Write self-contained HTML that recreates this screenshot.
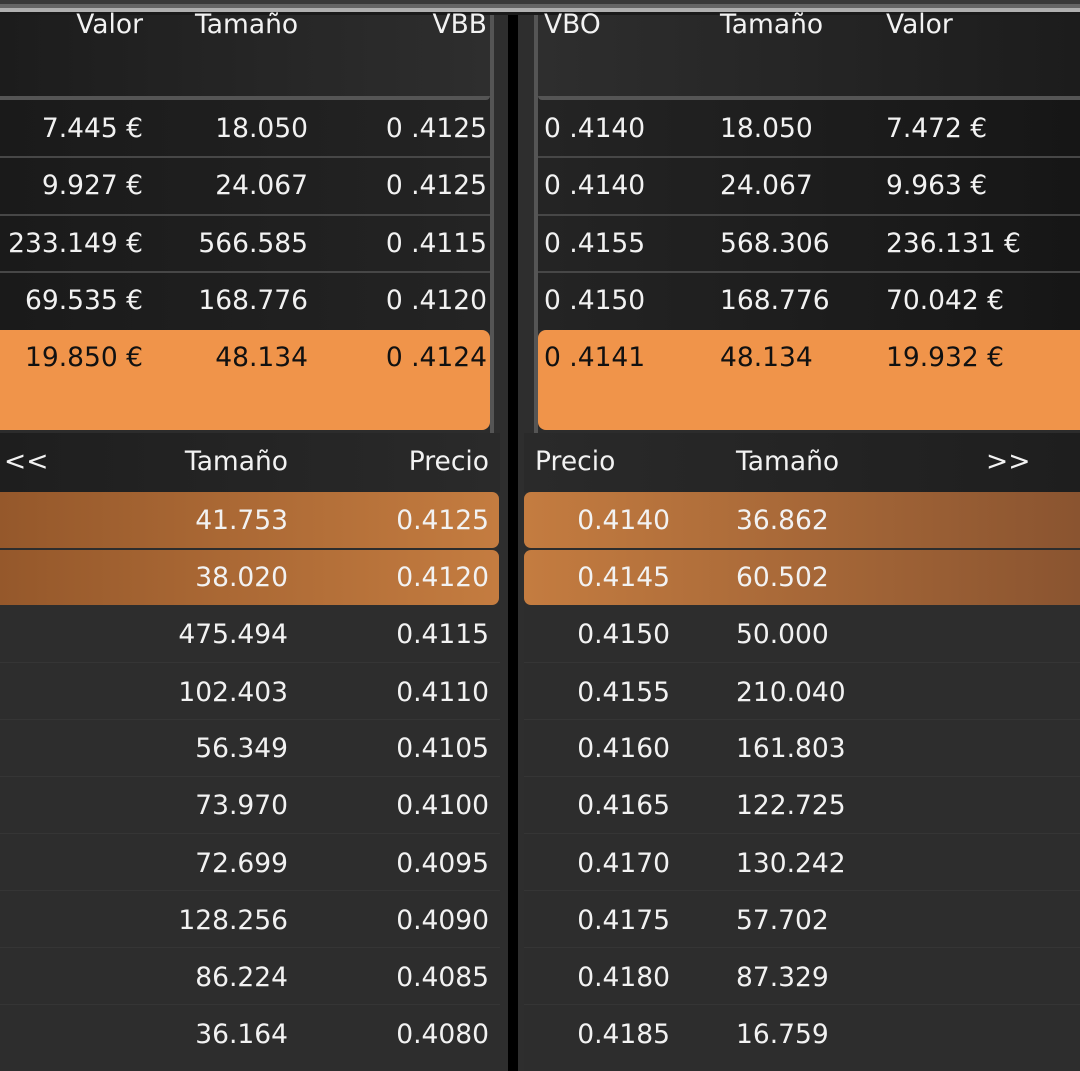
<!DOCTYPE html>
<html><head><meta charset="utf-8"><style>
*{margin:0;padding:0;box-sizing:border-box}
body{width:1080px;height:1071px;overflow:hidden;background:#2c2c2c;font-family:"DejaVu Sans","Liberation Sans",sans-serif;color:#f2f2f2;position:relative}
div{position:absolute}
.t{font-size:26.5px;line-height:34px;white-space:nowrap}
.r{text-align:right}
.k{color:#111}
</style></head><body>
<div style="left:0;top:0;width:1080px;height:4px;background:#3a3a3a"></div>
<div style="left:0;top:4px;width:1080px;height:4px;background:#666"></div>
<div style="left:0;top:8px;width:1080px;height:4px;background:#b0b0b0"></div>
<div style="left:0;top:12px;width:1080px;height:3px;background:#1a1a1a"></div>
<div style="left:0;top:15px;width:490px;height:82px;background:linear-gradient(90deg,#1c1c1c,#2e2e2e)"></div>
<div style="left:538px;top:15px;width:542px;height:82px;background:linear-gradient(90deg,#2e2e2e,#1c1c1c)"></div>
<div style="left:0;top:97px;width:490px;height:233px;background:linear-gradient(90deg,#1a1a1a,#242424)"></div>
<div style="left:538px;top:97px;width:542px;height:233px;background:linear-gradient(90deg,#242424,#161616)"></div>
<div style="left:0;top:96px;width:490px;height:4px;background:#555;border-radius:0 0 6px 0"></div>
<div style="left:538px;top:96px;width:542px;height:4px;background:#555;border-radius:0 0 0 6px"></div>
<div style="left:0;top:156px;width:490px;height:2px;background:#474747"></div>
<div style="left:0;top:214px;width:490px;height:2px;background:#474747"></div>
<div style="left:0;top:271px;width:490px;height:2px;background:#474747"></div>
<div style="left:538px;top:156px;width:542px;height:2px;background:#474747"></div>
<div style="left:538px;top:214px;width:542px;height:2px;background:#474747"></div>
<div style="left:538px;top:271px;width:542px;height:2px;background:#474747"></div>
<div style="left:490px;top:15px;width:4px;height:418px;background:#555"></div>
<div style="left:494px;top:15px;width:14px;height:1056px;background:#2e2e2e"></div>
<div style="left:508px;top:15px;width:10px;height:1056px;background:#000"></div>
<div style="left:518px;top:15px;width:16px;height:1056px;background:#2e2e2e"></div>
<div style="left:534px;top:15px;width:4px;height:418px;background:#555"></div>
<div style="left:0;top:330px;width:490px;height:100px;background:#f0944a;border-radius:0 8px 8px 0"></div>
<div style="left:538px;top:330px;width:542px;height:100px;background:#f0944a;border-radius:8px 0 0 8px"></div>
<div style="left:0;top:433px;width:500px;height:59px;background:linear-gradient(90deg,#1e1e1e,#2a2a2a)"></div>
<div style="left:524px;top:433px;width:556px;height:59px;background:linear-gradient(90deg,#2a2a2a,#1e1e1e)"></div>
<div style="left:0;top:492px;width:500px;height:579px;background:#2d2d2d"></div>
<div style="left:524px;top:492px;width:556px;height:579px;background:#2d2d2d"></div>
<div style="left:0;top:492px;width:499px;height:56px;background:linear-gradient(90deg,#95582b,#c47c40);border-radius:0 7px 7px 0"></div>
<div style="left:0;top:550px;width:499px;height:55px;background:linear-gradient(90deg,#95582b,#c47c40);border-radius:0 7px 7px 0"></div>
<div style="left:524px;top:492px;width:556px;height:56px;background:linear-gradient(90deg,#c47c40,#8a5430);border-radius:7px 0 0 7px"></div>
<div style="left:524px;top:550px;width:556px;height:55px;background:linear-gradient(90deg,#c47c40,#8a5430);border-radius:7px 0 0 7px"></div>
<div style="left:0;top:662px;width:500px;height:1px;background:#353535"></div>
<div style="left:0;top:719px;width:500px;height:1px;background:#353535"></div>
<div style="left:0;top:776px;width:500px;height:1px;background:#353535"></div>
<div style="left:0;top:833px;width:500px;height:1px;background:#353535"></div>
<div style="left:0;top:890px;width:500px;height:1px;background:#353535"></div>
<div style="left:0;top:947px;width:500px;height:1px;background:#353535"></div>
<div style="left:0;top:1004px;width:500px;height:1px;background:#353535"></div>
<div style="left:524px;top:662px;width:556px;height:1px;background:#353535"></div>
<div style="left:524px;top:719px;width:556px;height:1px;background:#353535"></div>
<div style="left:524px;top:776px;width:556px;height:1px;background:#353535"></div>
<div style="left:524px;top:833px;width:556px;height:1px;background:#353535"></div>
<div style="left:524px;top:890px;width:556px;height:1px;background:#353535"></div>
<div style="left:524px;top:947px;width:556px;height:1px;background:#353535"></div>
<div style="left:524px;top:1004px;width:556px;height:1px;background:#353535"></div>

<div class="t r" style="right:937px;top:8px">Valor</div>
<div class="t" style="left:195px;top:8px">Tamaño</div>
<div class="t r" style="right:593px;top:8px">VBB</div>
<div class="t" style="left:544px;top:8px">VBO</div>
<div class="t" style="left:720px;top:8px">Tamaño</div>
<div class="t" style="left:886px;top:8px">Valor</div>

<div class="t r" style="right:937px;top:112px">7.445 €</div>
<div class="t r" style="right:772px;top:112px">18.050</div>
<div class="t r" style="right:593px;top:112px">0 .4125</div>
<div class="t r" style="right:937px;top:169px">9.927 €</div>
<div class="t r" style="right:772px;top:169px">24.067</div>
<div class="t r" style="right:593px;top:169px">0 .4125</div>
<div class="t r" style="right:937px;top:227px">233.149 €</div>
<div class="t r" style="right:772px;top:227px">566.585</div>
<div class="t r" style="right:593px;top:227px">0 .4115</div>
<div class="t r" style="right:937px;top:284px">69.535 €</div>
<div class="t r" style="right:772px;top:284px">168.776</div>
<div class="t r" style="right:593px;top:284px">0 .4120</div>
<div class="t r k" style="right:937px;top:341px">19.850 €</div>
<div class="t r k" style="right:772px;top:341px">48.134</div>
<div class="t r k" style="right:593px;top:341px">0 .4124</div>
<div class="t" style="left:544px;top:112px">0 .4140</div>
<div class="t" style="left:720px;top:112px">18.050</div>
<div class="t" style="left:886px;top:112px">7.472 €</div>
<div class="t" style="left:544px;top:169px">0 .4140</div>
<div class="t" style="left:720px;top:169px">24.067</div>
<div class="t" style="left:886px;top:169px">9.963 €</div>
<div class="t" style="left:544px;top:227px">0 .4155</div>
<div class="t" style="left:720px;top:227px">568.306</div>
<div class="t" style="left:886px;top:227px">236.131 €</div>
<div class="t" style="left:544px;top:284px">0 .4150</div>
<div class="t" style="left:720px;top:284px">168.776</div>
<div class="t" style="left:886px;top:284px">70.042 €</div>
<div class="t k" style="left:544px;top:341px">0 .4141</div>
<div class="t k" style="left:720px;top:341px">48.134</div>
<div class="t k" style="left:886px;top:341px">19.932 €</div>

<div class="t" style="left:4px;top:445px">&lt;&lt;</div>
<div class="t r" style="right:792px;top:445px">Tamaño</div>
<div class="t r" style="right:591px;top:445px">Precio</div>
<div class="t" style="left:535px;top:445px">Precio</div>
<div class="t" style="left:736px;top:445px">Tamaño</div>
<div class="t" style="left:986px;top:445px">&gt;&gt;</div>

<div class="t r" style="right:792px;top:504px">41.753</div><div class="t r" style="right:591px;top:504px">0.4125</div>
<div class="t r" style="right:792px;top:561px">38.020</div><div class="t r" style="right:591px;top:561px">0.4120</div>
<div class="t r" style="right:792px;top:618px">475.494</div><div class="t r" style="right:591px;top:618px">0.4115</div>
<div class="t r" style="right:792px;top:676px">102.403</div><div class="t r" style="right:591px;top:676px">0.4110</div>
<div class="t r" style="right:792px;top:732px">56.349</div><div class="t r" style="right:591px;top:732px">0.4105</div>
<div class="t r" style="right:792px;top:789px">73.970</div><div class="t r" style="right:591px;top:789px">0.4100</div>
<div class="t r" style="right:792px;top:847px">72.699</div><div class="t r" style="right:591px;top:847px">0.4095</div>
<div class="t r" style="right:792px;top:904px">128.256</div><div class="t r" style="right:591px;top:904px">0.4090</div>
<div class="t r" style="right:792px;top:961px">86.224</div><div class="t r" style="right:591px;top:961px">0.4085</div>
<div class="t r" style="right:792px;top:1018px">36.164</div><div class="t r" style="right:591px;top:1018px">0.4080</div>
<div class="t r" style="right:410px;top:504px">0.4140</div><div class="t" style="left:736px;top:504px">36.862</div>
<div class="t r" style="right:410px;top:561px">0.4145</div><div class="t" style="left:736px;top:561px">60.502</div>
<div class="t r" style="right:410px;top:618px">0.4150</div><div class="t" style="left:736px;top:618px">50.000</div>
<div class="t r" style="right:410px;top:676px">0.4155</div><div class="t" style="left:736px;top:676px">210.040</div>
<div class="t r" style="right:410px;top:732px">0.4160</div><div class="t" style="left:736px;top:732px">161.803</div>
<div class="t r" style="right:410px;top:789px">0.4165</div><div class="t" style="left:736px;top:789px">122.725</div>
<div class="t r" style="right:410px;top:847px">0.4170</div><div class="t" style="left:736px;top:847px">130.242</div>
<div class="t r" style="right:410px;top:904px">0.4175</div><div class="t" style="left:736px;top:904px">57.702</div>
<div class="t r" style="right:410px;top:961px">0.4180</div><div class="t" style="left:736px;top:961px">87.329</div>
<div class="t r" style="right:410px;top:1018px">0.4185</div><div class="t" style="left:736px;top:1018px">16.759</div>
</body></html>
